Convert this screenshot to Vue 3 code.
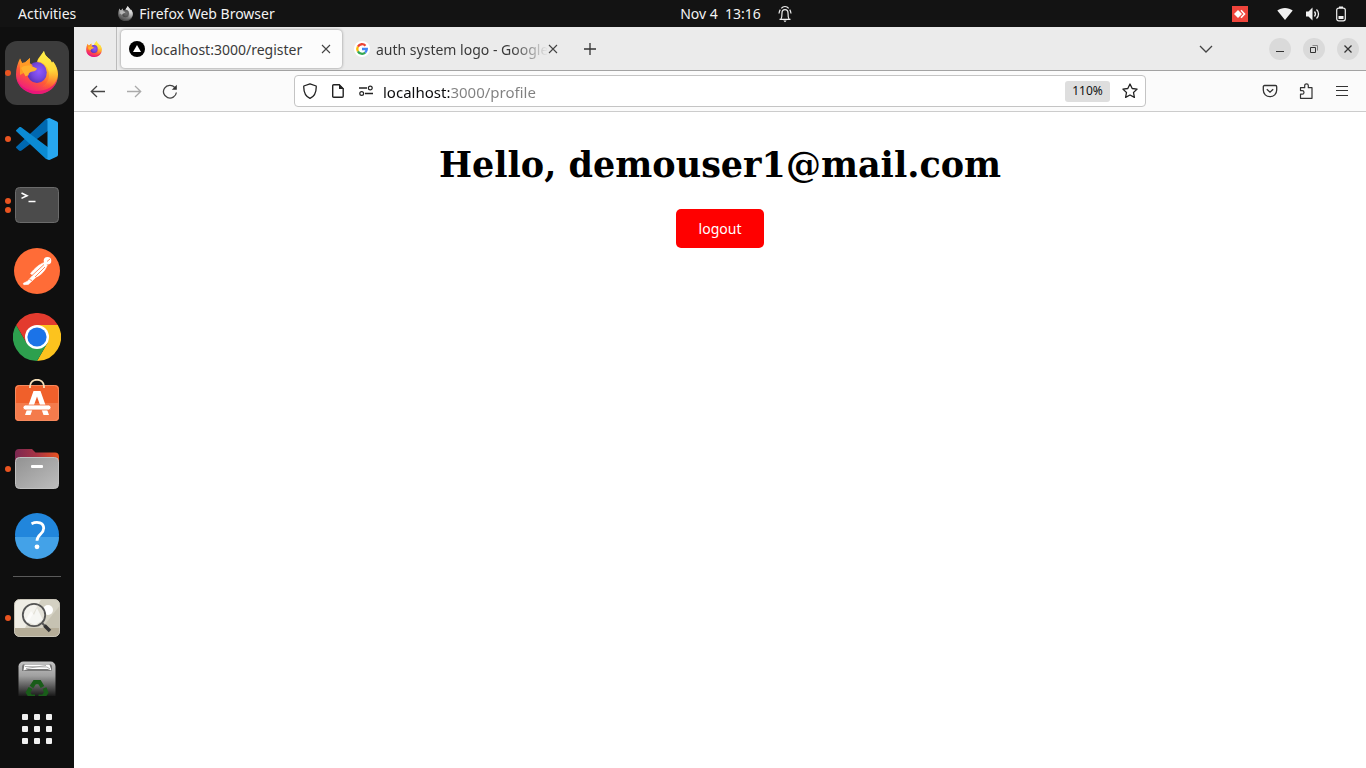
<script setup>
import { ref } from 'vue'

const address = ref('localhost:3000/profile')
const gridDots = [0, 1, 2, 3, 4, 5, 6, 7, 8]
</script>

<template>
  <div class="desktop">
    <svg class="defs" width="0" height="0" aria-hidden="true">
      <defs>
        <linearGradient id="fxBody" x1="0.8" y1="0.1" x2="0.35" y2="0.95">
          <stop offset="0" stop-color="#ffe847" />
          <stop offset="0.35" stop-color="#ffb52a" />
          <stop offset="0.65" stop-color="#ff5a36" />
          <stop offset="1" stop-color="#f0207a" />
        </linearGradient>
        <linearGradient id="fxFlame" x1="0.4" y1="0" x2="0.5" y2="1">
          <stop offset="0" stop-color="#fff14a" />
          <stop offset="0.55" stop-color="#ffd83a" />
          <stop offset="1" stop-color="#ff8a2b" stop-opacity="0" />
        </linearGradient>
        <radialGradient id="fxGlobe" cx="0.6" cy="0.45" r="0.6">
          <stop offset="0" stop-color="#9059ff" />
          <stop offset="0.6" stop-color="#7547dd" />
          <stop offset="1" stop-color="#5b31b8" />
        </radialGradient>
        <symbol id="firefox" viewBox="3 2 42 43">
          <path d="M7 9.5 9 14l3-.5L17 9l-.3 5.500 4 1L24 13l1-3 6-8c.5 4.500 4 6.500 6.500 9l1.500 3 1-1.500c3 3.500 5 8 5 12.500C45 37 36 45 24.500 45S3 37 3 25.500C3 20 4.500 14 7 9.500Z" fill="url(#fxBody)" />
          <path d="M3.300 28C6 37 14 42 24 42c10 0 18-5 20.500-13C43 39 35 45 24.500 45S5 38 3.300 28Z" fill="#e4107c" opacity=".7" />
          <path d="M24.500 12 31 2c.5 4.500 4 6.500 6.500 9l1.500 3 1-1.500c5 7 6 15 1 22-3 4-8 5-12 3 7-3 9-13 5-19-2-3.500-5-5.500-9.500-6.500Z" fill="url(#fxFlame)" />
          <ellipse cx="24" cy="23.500" rx="9.800" ry="10.500" fill="url(#fxGlobe)" />
          <path d="M7 9.500 9 14l3-.5L17 9l-.3 5.500 3.300 1.800c-3 1.200-5 3.200-5.600 5.700L7 26Z" fill="#ff9a26" />
          <path d="M8 19c3-2.500 7-3 10.500-2l5.500 2.500c-.5 1.700-2 2.700-4.500 3-2.500.4-4 1.800-4 3.700l-3 1Z" fill="#ffb02e" />
        </symbol>
      </defs>
    </svg>

    <header class="topbar">
      <div class="topbar-left">
        <button class="top-item">Activities</button>
        <button class="top-item app-menu">
          <svg class="app-glyph" width="15" height="15" aria-hidden="true"><use href="#firefox" /></svg>
          Firefox Web Browser
        </button>
      </div>
      <button class="top-item clock">
        <span>Nov 4&nbsp; 13:16</span>
        <svg width="16" height="18" viewBox="0 0 16 18" fill="none" stroke="#eee" stroke-width="1.200" aria-hidden="true">
          <path d="M2.500 14.300h11M4 14c1-1.500 1-3 1-6 0-2 1-3.400 3-3.400S11 6 11 8c0 3 0 4.500 1 6M4.300 3.300C5.300 2 6.500 1.500 8 1.500s2.700.5 3.700 1.800M3.300 4.600C2.500 5.600 2.200 6.800 2 8.500M12.700 4.600c.8 1 1.100 2.200 1.300 3.900" />
          <path d="M6.300 15.500h3.400L8 17.200Z" fill="#eee" stroke="none" />
        </svg>
      </button>
      <div class="topbar-right">
        <button class="top-item anydesk" aria-label="AnyDesk">
          <svg width="16" height="16" viewBox="0 0 16 16"><path d="M0 0h16v16H0Z" fill="#ef443b" /><path d="m6 4 4 4-4 4-4-4Z" fill="#fff" /><path d="m9 4.300 3.500 3.700L9 11.700" fill="none" stroke="#fff" stroke-width="1.600" /></svg>
        </button>
        <button class="top-item status" aria-label="System menu">
          <svg width="16" height="16" viewBox="0 0 16 16"><path d="M.3 4.500C4.500 1 11.500 1 15.700 4.500L8 14Z" fill="#f2f2f2" /></svg>
          <svg width="16" height="16" viewBox="0 0 16 16"><path d="M1 5.500h2.500L7.500 1.500v13l-4-4H1Z" fill="#f2f2f2" /><path d="M9.500 5.500c1.200 1.500 1.200 3.500 0 5M11.500 3.500c2.700 2.500 2.700 6.500 0 9" fill="none" stroke="#f2f2f2" stroke-width="1.300" /></svg>
          <svg width="16" height="16" viewBox="0 0 16 16"><rect x="3.700" y="2.200" width="8.600" height="12.600" rx="2" fill="none" stroke="#f2f2f2" stroke-width="1.200" /><path d="M6 .5h4V2H6ZM5.500 10h5v3h-5Z" fill="#f2f2f2" /></svg>
        </button>
      </div>
    </header>

    <nav class="dock" aria-label="Dock">
      <div class="dock-list">
        <button class="dock-item focused" aria-label="Firefox">
          <i class="dots"><b></b></i>
          <svg width="48" height="48" viewBox="0 0 48 48"><use href="#firefox" x="3" y="2" width="42" height="43" /></svg>
        </button>
        <button class="dock-item" aria-label="Visual Studio Code">
          <i class="dots"><b></b></i>
          <svg width="48" height="48" viewBox="0 0 48 48">
            <path d="M3.500 31.500 33 4l3-1v12L8.500 35.500c-.8.600-1.800.5-2.500 0l-2.400-2.200c-.8-.6-.8-1.200-.1-1.800Z" fill="#0068b0" />
            <path d="M3.500 16.500 33 44l3 1V33L8.500 12.500c-.8-.6-1.800-.5-2.500 0l-2.400 2.200c-.8.600-.8 1.200-.1 1.800Z" fill="#0b8bd3" />
            <path d="M33 4.500 36.500 3 44 6.600c.7.300 1 .9 1 1.600v31.600c0 .7-.3 1.300-1 1.600L36.500 45 33 43.500c1 .3 1.500-.3 1.500-1.500V6c0-1.200-.5-1.800-1.500-1.500Z" fill="#27a7f0" />
          </svg>
        </button>
        <button class="dock-item" aria-label="Terminal">
          <i class="dots"><b></b><b></b></i>
          <svg width="48" height="48" viewBox="0 0 48 48">
            <rect x="2.500" y="6.500" width="43" height="35" rx="4" fill="#4b4b4b" stroke="#6b6b6b" />
            <path d="m8.500 12 5.500 2.700-5.500 2.700M15.500 20.500h7" fill="none" stroke="#fff" stroke-width="1.600" />
          </svg>
        </button>
        <button class="dock-item" aria-label="Postman">
          <svg width="48" height="48" viewBox="0 0 48 48">
            <circle cx="24" cy="24" r="23" fill="#ff6c37" />
            <circle cx="34.500" cy="13.800" r="3.800" fill="#fff" />
            <path d="M31.500 15.500c-5 1.500-10 6-14 11l2.300 1.800-5.300 6-4.200 2 .5 1.400 4.500-.3 8-7.400c5-2 9-6.500 11-12Z" fill="#fff" stroke="#fff" stroke-width=".6" />
            <path d="m19 28.500 12-11M22 30l10-10M34 14.500l3-2.500M16.500 32.500l2.500 1" stroke="#ff6c37" stroke-width=".8" fill="none" />
          </svg>
        </button>
        <button class="dock-item" aria-label="Google Chrome">
          <svg width="48" height="48" viewBox="0 0 48 48">
            <path d="M44.800 12A24 24 0 0 1 24 48l10.400-18L24 12Z" fill="#fcc31e" />
            <path d="M24 48A24 24 0 0 1 3.200 12L13.600 30l20.800 0Z" fill="#2da04e" />
            <path d="M3.200 12 13.600 30 24 24V12h20.800A24 24 0 0 0 3.200 12Z" fill="#e33b2e" />
            <circle cx="24" cy="24" r="12" fill="#fff" />
            <circle cx="24" cy="24" r="9.600" fill="#1b73e8" />
          </svg>
        </button>
        <button class="dock-item" aria-label="Ubuntu Software">
          <svg width="48" height="48" viewBox="0 0 48 48">
            <rect x="2" y="6" width="44" height="36" rx="4" fill="#f0602b" />
            <path d="M2 24h44v14a4 4 0 0 1-4 4H6a4 4 0 0 1-4-4Z" fill="#f47b4c" />
            <rect x="2.500" y="6.500" width="43" height="35" rx="4" fill="none" stroke="#f58a5e" />
            <path d="M17 9V7.500c0-9 14-9 14 0V9" fill="none" stroke="#f7dfb8" stroke-width="1.800" />
            <path d="M20.500 12h7L36 36h-5.500L24 17.500 17.500 36H12Z" fill="#fff" />
            <rect x="10" y="26" width="28" height="5" rx="2.500" fill="#fff" stroke="#f4713f" stroke-width=".8" />
          </svg>
        </button>
        <button class="dock-item" aria-label="Files">
          <i class="dots"><b></b></i>
          <svg width="48" height="48" viewBox="0 0 48 48">
            <defs>
              <linearGradient id="folderBack"><stop offset="0" stop-color="#7b2851" /><stop offset="0.5" stop-color="#a83344" /><stop offset="1" stop-color="#e95420" /></linearGradient>
              <linearGradient id="folderFront" x2="1" y2="1"><stop offset="0" stop-color="#929292" /><stop offset="1" stop-color="#bdbdbd" /></linearGradient>
            </defs>
            <path d="M2 20V8c0-2.500 1.500-4 4-4h13l3.500 3.500H42c2.500 0 4 1.500 4 4V20Z" fill="url(#folderBack)" />
            <rect x="2.500" y="12.500" width="43" height="31" rx="4" fill="url(#folderFront)" stroke="#c0c0c0" />
            <rect x="18" y="20" width="12" height="3" rx="1" fill="#fff" />
          </svg>
        </button>
        <button class="dock-item" aria-label="Help">
          <svg width="48" height="48" viewBox="0 0 48 48">
            <circle cx="24" cy="24" r="22" fill="#2186dc" />
            <path d="M2 26a22 22 0 0 0 44 0Z" fill="#43a2e8" />
            <path d="M18.500 12.800c6-2.800 12.200-1 12.200 4.500 0 6-6.700 6-6.700 12.500" fill="none" stroke="#fff" stroke-width="2.800" />
            <circle cx="24" cy="35.800" r="2.400" fill="#fff" />
          </svg>
        </button>
        <hr class="dock-rule">
        <button class="dock-item" aria-label="Image Viewer">
          <i class="dots"><b></b></i>
          <svg width="48" height="48" viewBox="0 0 48 48">
            <rect x="1.500" y="5.500" width="45" height="37" rx="5" fill="#efede5" />
            <path d="M28 5.500h14a4.500 4.500 0 0 1 4.500 4.500v24H12Z" fill="#d4d1c3" />
            <path d="M46.500 12v22H29Z" fill="#c6c2b2" />
            <path d="M1.500 34h45v4a4.500 4.500 0 0 1-4.500 4.500H6A4.500 4.500 0 0 1 1.500 38Z" fill="#b5ad98" />
            <rect x="1.500" y="5.500" width="45" height="37" rx="5" fill="none" stroke="#c9c5b8" />
            <circle cx="35" cy="16" r="5" fill="#fff" />
            <path d="m12 27 6-10 3 4 3-7 6 12-8 5Z" fill="#fff" opacity=".7" />
            <circle cx="21" cy="21" r="11.200" fill="#fff" fill-opacity=".35" stroke="#555" stroke-width="1.800" />
            <path d="m29 29 3 3" stroke="#555" stroke-width="2" />
            <path d="m31.500 31.500 5.500 5.500" stroke="#333" stroke-width="3.600" />
          </svg>
        </button>
        <button class="dock-item" aria-label="Trash">
          <svg width="48" height="48" viewBox="0 0 48 48">
            <defs><linearGradient id="bin" x2="0" y2="1"><stop offset="0" stop-color="#c4c4c4" /><stop offset="0.3" stop-color="#a0a0a0" /><stop offset="0.75" stop-color="#0f0f0f" /></linearGradient></defs>
            <rect x="5.500" y="1.500" width="37" height="48" rx="5" fill="url(#bin)" />
            <path d="M9 11V7c0-2 1-3 3-3h24c2 0 3 1 3 3v4Z" fill="#777" />
            <path d="m10.500 10.500 1-6h25l2 6-4-1.500H15Z" fill="#fff" />
            <path d="m12 6.500 22 .5 3 2M13 8.500l20-3" fill="none" stroke="#999" stroke-width=".8" />
            <path d="m18.500 27 3.200-4.800h4.800l3 4.800M31.500 28l1.800 4.500-2.800 4h-5M22 36.500h-4.500l-2.500-4 2.500-4.500" fill="none" stroke="#195c19" stroke-width="4.200" />
          </svg>
        </button>
      </div>
      <button class="show-apps" aria-label="Show Applications">
        <span v-for="dot in gridDots" :key="dot"></span>
      </button>
    </nav>

    <main class="window">
      <div class="tabstrip">
        <button class="pinned" aria-label="Firefox">
          <svg width="16" height="16" aria-hidden="true"><use href="#firefox" /></svg>
        </button>
        <div class="tab active">
          <svg width="16" height="16" viewBox="0 0 16 16" aria-hidden="true"><circle cx="8" cy="8" r="8" fill="#000" /><path d="m8 4 4 7H4Z" fill="#fff" /></svg>
          <span class="tab-title">localhost:3000/register</span>
          <button class="close" aria-label="Close tab"><svg width="10" height="10" viewBox="0 0 10 10"><path d="m1 1 8 8M9 1 1 9" stroke="#444" stroke-width="1.100" /></svg></button>
        </div>
        <div class="tab second">
          <svg width="16" height="16" viewBox="0 0 16 16" aria-hidden="true">
            <circle cx="8" cy="8" r="8" fill="#fff" />
            <g fill="none" stroke-width="2.300">
              <path d="M3.900 5.600A4.800 4.800 0 0 1 11.500 4.700" stroke="#ea4335" />
              <path d="M3.900 5.600a4.800 4.800 0 0 0 0 4.800" stroke="#fbbc05" />
              <path d="M3.900 10.400a4.800 4.800 0 0 0 7.300 1.200" stroke="#34a853" />
              <path d="M11.200 11.600A4.800 4.800 0 0 0 12.800 8H8" stroke="#4285f4" />
            </g>
          </svg>
          <span class="tab-title faded">auth system logo - Google</span>
          <button class="close" aria-label="Close tab"><svg width="10" height="10" viewBox="0 0 10 10"><path d="m1 1 8 8M9 1 1 9" stroke="#444" stroke-width="1.100" /></svg></button>
        </div>
        <button class="icon-button new-tab" aria-label="New tab"><svg width="12" height="12" viewBox="0 0 12 12"><path d="M6 0v12M0 6h12" stroke="#333" stroke-width="1.300" /></svg></button>
        <button class="icon-button all-tabs" aria-label="List all tabs"><svg width="14" height="8" viewBox="0 0 14 8"><path d="m1 1 6 6 6-6" fill="none" stroke="#444" stroke-width="1.300" /></svg></button>
        <div class="window-controls">
          <button aria-label="Minimize"><svg width="8" height="8" viewBox="0 0 8 8"><path d="M0 6.500h8" stroke="#333" /></svg></button>
          <button aria-label="Restore"><svg width="8" height="8" viewBox="0 0 8 8" fill="none"><path d="M.5 2.500h5v5h-5Z" stroke="#333" /><path d="M2.500.5h5v5" stroke="#888" /></svg></button>
          <button aria-label="Close"><svg width="8" height="8" viewBox="0 0 8 8"><path d="m.5.5 7 7M7.500.5l-7 7" stroke="#333" stroke-width="1.300" /></svg></button>
        </div>
      </div>

      <div class="toolbar">
        <button class="icon-button" aria-label="Back"><svg width="16" height="16" viewBox="0 0 16 16"><path d="M15 8.500H1.500M7 3 1.300 8.500 7 14" fill="none" stroke="#444" stroke-width="1.300" /></svg></button>
        <button class="icon-button" aria-label="Forward" disabled><svg width="16" height="16" viewBox="0 0 16 16"><path d="M1 8.500h13.500M9 3l5.700 5.500L9 14" fill="none" stroke="#aaa" stroke-width="1.300" /></svg></button>
        <button class="icon-button" aria-label="Reload"><svg width="16" height="16" viewBox="0 0 16 16"><path d="M12.800 4.500A6.500 6.300 0 1 0 14.400 9.500" fill="none" stroke="#444" stroke-width="1.300" /><path d="M14.800 1.800v5H9.800Z" fill="#333" /></svg></button>
        <span class="spring"></span>
        <div class="urlbar">
          <button aria-label="Tracking protection"><svg width="16" height="16" viewBox="0 0 16 16"><path d="M8 .8 14.200 3c.3 6-1.300 10-6.200 12.400C3.100 13 1.500 9 1.800 3Z" fill="none" stroke="#222" stroke-width="1.300" stroke-linejoin="round" /></svg></button>
          <button aria-label="Site information"><svg width="16" height="16" viewBox="0 0 16 16"><path d="M3.700 1.700h5.500l4 4v7.600c0 .6-.4 1-1 1H3.700c-.6 0-1-.4-1-1V2.700c0-.6.4-1 1-1Z" fill="none" stroke="#222" stroke-width="1.400" /><path d="M9 1v5h5Z" fill="#222" /></svg></button>
          <button aria-label="Permissions"><svg width="16" height="16" viewBox="0 0 16 16"><path d="M1 5h8M7 10.500h8" stroke="#222" stroke-width="1.300" /><g fill="none" stroke="#222" stroke-width="1.200"><circle cx="12.300" cy="5" r="1.900" /><circle cx="3.700" cy="10.500" r="1.900" /></g></svg></button>
          <input v-model="address" aria-label="Address" type="text" spellcheck="false">
          <button class="zoom">110%</button>
          <button class="bookmark" aria-label="Bookmark this page"><svg width="16" height="16" viewBox="0 0 16 16"><path d="m8 1 2.200 4.500 4.900.6-3.600 3.400.9 4.900L8 12l-4.400 2.400.9-4.900L.9 6.100l4.900-.6Z" fill="none" stroke="#222" stroke-width="1.300" stroke-linejoin="round" /></svg></button>
        </div>
        <span class="spring"></span>
        <button class="icon-button" aria-label="Save to Pocket"><svg width="16" height="16" viewBox="0 0 16 16"><path d="M2.500 2.500h11c.7 0 1.200.5 1.200 1.200V7c0 4-3 6.700-6.700 6.700S1.300 11 1.300 7V3.700c0-.7.5-1.200 1.200-1.200ZM4.800 6.200 8 9.200l3.200-3" fill="none" stroke="#333" stroke-width="1.300" /></svg></button>
        <button class="icon-button" aria-label="Extensions"><svg width="16" height="16" viewBox="0 0 16 16"><path d="M2.500 4.700h4.200V2.500c0-2.300 3.600-2.300 3.600 0v2.200H14v10.600H2.500v-4.100h1.700c2.400 0 2.400-3.600 0-3.600H2.500Z" fill="none" stroke="#333" stroke-width="1.200" stroke-linejoin="round" /></svg></button>
        <button class="icon-button" aria-label="Application menu"><svg width="12" height="12" viewBox="0 0 12 12"><path d="M0 1.500h12M0 5.500h12M0 10.500h12" stroke="#333" /></svg></button>
      </div>

      <section class="page">
        <h1>Hello, demouser1@mail.com</h1>
        <button class="logout">logout</button>
      </section>
    </main>
  </div>
</template>

<style>
body {
  background: #fff;
}
</style>

<style scoped>
.desktop {
  display: grid;
  grid-template: 27px 1fr / 74px 1fr;
  min-height: 100vh;
  font: 15px/20px "Noto Sans", sans-serif;
}
.defs {
  position: absolute;
}
svg {
  display: block;
  flex: none;
}
button {
  display: flex;
  align-items: center;
  justify-content: center;
  padding: 0;
  border: 0;
  background: none;
  font: inherit;
  color: inherit;
}

.topbar {
  grid-column: 1 / -1;
  display: grid;
  grid-template-columns: 1fr auto 1fr;
  align-items: center;
  padding: 0 17px 0 18px;
  background: #131313;
  color: #f2f2f2;
  font-size: 14px;
}
.topbar-left,
.topbar-right {
  display: flex;
  align-items: center;
}
.topbar-left {
  gap: 42px;
}
.topbar-right {
  justify-content: flex-end;
  gap: 29px;
}
.app-menu {
  gap: 6px;
}
.app-glyph {
  filter: grayscale(1);
}
.clock {
  gap: 16px;
  padding-left: 106px;
}
.status {
  gap: 12px;
}

.dock {
  display: flex;
  flex-direction: column;
  align-items: center;
  background: #0f0f0f;
  padding-top: 14px;
}
.dock-list {
  display: flex;
  flex-direction: column;
  gap: 2px;
  align-self: stretch;
  align-items: center;
  height: 655px;
  overflow: hidden;
}
.dock-item {
  position: relative;
  flex: none;
  width: 64px;
  height: 64px;
  border-radius: 12px;
}
.focused {
  background: #3c3c3c;
}
.dots {
  position: absolute;
  left: 0;
  top: 0;
  bottom: 0;
  display: flex;
  flex-direction: column;
  justify-content: center;
  gap: 3px;
}
.dots b {
  width: 6px;
  height: 6px;
  border-radius: 50%;
  background: #e95420;
}
.dock-rule {
  flex: none;
  width: 48px;
  height: 1px;
  margin: 7px 0;
  border: 0;
  background: #5a5a5a;
}
.show-apps {
  display: grid;
  grid-template-columns: repeat(3, 6px);
  gap: 6px;
  align-content: center;
  height: 66px;
}
.show-apps span {
  height: 6px;
  border-radius: 1px;
  background: #f0f0f0;
}

.window {
  display: flex;
  flex-direction: column;
  min-width: 0;
}
.tabstrip {
  display: flex;
  align-items: center;
  height: 43px;
  background: #ebebeb;
  border-bottom: 1px solid #a3a3a3;
  color: #3a3a3a;
}
.pinned {
  align-self: stretch;
  width: 43px;
  padding-right: 2px;
  box-sizing: border-box;
  border-right: 1px solid #bbb;
}
.tab {
  display: flex;
  align-items: center;
  box-sizing: border-box;
  height: 38px;
  width: 221px;
  padding: 0 11px 0 8px;
  font-size: 14px;
}
.tab.active {
  margin-left: 4px;
  border-radius: 4px;
  background: #fcfcfc;
  box-shadow: 0 0 3px #888;
}
.tab.second {
  width: auto;
  margin-left: 4px;
  padding-right: 14px;
}
.tab-title {
  flex: 1;
  margin-left: 6px;
  padding-top: 2px;
  white-space: nowrap;
}
.faded {
  mask-image: linear-gradient(to left, transparent, #000 36px);
}
.close {
  width: 10px;
}
.icon-button {
  flex: none;
  width: 36px;
  height: 36px;
}
.all-tabs {
  margin-left: auto;
}
.window-controls {
  display: flex;
  gap: 12px;
  margin: 0 7px 0 45px;
}
.window-controls button {
  width: 22px;
  height: 22px;
  border-radius: 50%;
  background: #dadada;
}

.toolbar {
  display: flex;
  align-items: center;
  height: 40px;
  padding: 0 6px;
  background: #fbfbfb;
  border-bottom: 1px solid #ccc;
}
.spring {
  flex: 0 1 106px;
}
.urlbar {
  flex: 1;
  display: flex;
  align-items: center;
  box-sizing: border-box;
  height: 32px;
  padding: 0 7px;
  gap: 12px;
  border: 1px solid #c4c4c4;
  border-radius: 4px;
  background: #fff;
}
.urlbar input {
  flex: 1;
  min-width: 0;
  padding: 1px 0 0;
  margin-left: -3px;
  border: 0;
  outline: 0;
  font: inherit;
  color: transparent;
  background: linear-gradient(to right, #0c0c0d 67px, #808080 67px);
  background-clip: text;
}
.zoom {
  width: 45px;
  height: 21px;
  border-radius: 3px;
  background: #dedede;
  color: #111;
  font-size: 12px;
}

.page {
  flex: 1;
  display: flex;
  flex-direction: column;
  align-items: center;
  background: #fff;
}
h1 {
  margin: 32px 0 24px;
  font: bold 35px/41px "DejaVu Serif", serif;
  color: #000;
}
.logout {
  width: 88px;
  height: 39px;
  border-radius: 5px;
  background: #f00;
  color: #fff;
  font-size: 14px;
}
</style>
